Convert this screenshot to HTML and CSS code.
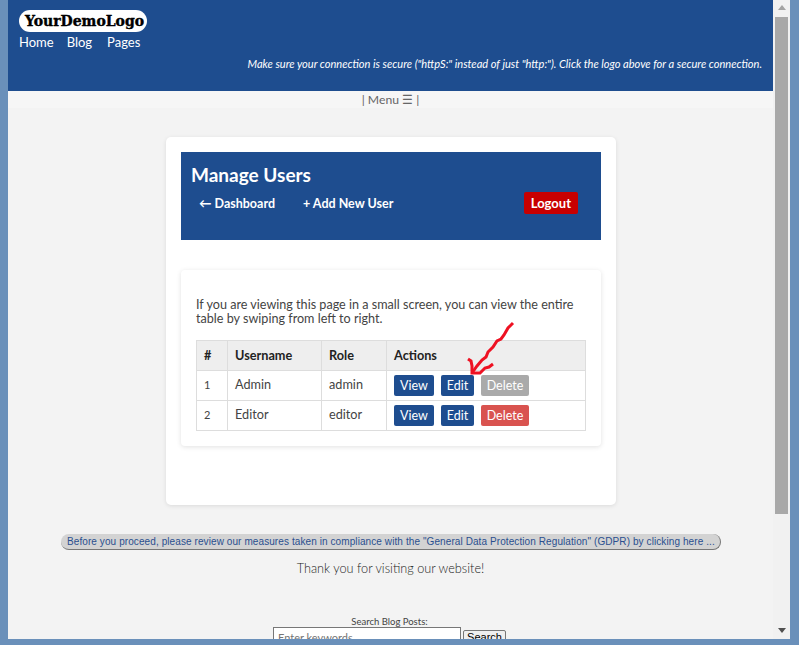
FILE: index.html
```html
<!DOCTYPE html>
<html lang="en">
<head>
    <meta charset="UTF-8">
    <meta name="viewport" content="width=device-width, initial-scale=1.0">
    <title>Manage Users</title>
    <link rel="stylesheet" href="styles.css">
</head>
<body>
    <div class="frame">
        <div class="viewport">
            <header class="site-header">
                <a class="logo" href="#">YourDemoLogo</a>
                <nav class="site-nav">
                    <a href="#">Home</a>
                    <a href="#">Blog</a>
                    <a href="#">Pages</a>
                </nav>
                <p class="secure-note">Make sure your connection is secure ("httpS:" instead of just "http:"). Click the logo above for a secure connection.</p>
            </header>
            <div class="menu-bar">| Menu ☰ |</div>

            <main class="panel">
                <div class="panel-head">
                    <h2>Manage Users</h2>
                    <div class="panel-links">
                        <a href="#">← Dashboard</a>
                        <a href="#">+ Add New User</a>
                        <a class="logout" href="#">Logout</a>
                    </div>
                </div>

                <section class="table-card">
                    <p>If you are viewing this page in a small screen, you can view the entire table by swiping from left to right.</p>
                    <table>
                        <thead>
                            <tr>
                                <th class="col-num">#</th>
                                <th class="col-user">Username</th>
                                <th class="col-role">Role</th>
                                <th>Actions</th>
                            </tr>
                        </thead>
                        <tbody>
                            <tr>
                                <td class="num">1</td>
                                <td>Admin</td>
                                <td>admin</td>
                                <td class="actions">
                                    <button class="btn btn-view">View</button>
                                    <button class="btn btn-edit">Edit</button>
                                    <button class="btn btn-off">Delete</button>
                                </td>
                            </tr>
                            <tr>
                                <td class="num">2</td>
                                <td>Editor</td>
                                <td>editor</td>
                                <td class="actions">
                                    <button class="btn btn-view">View</button>
                                    <button class="btn btn-edit">Edit</button>
                                    <button class="btn btn-del">Delete</button>
                                </td>
                            </tr>
                        </tbody>
                    </table>
                </section>
            </main>

            <a class="gdpr" href="#">Before you proceed, please review our measures taken in compliance with the "General Data Protection Regulation" (GDPR) by clicking here ...</a>
            <p class="thanks">Thank you for visiting our website!</p>

            <form class="search">
                <label for="q">Search Blog Posts:</label>
                <div class="search-row">
                    <input type="text" id="q" placeholder="Enter keywords">
                    <button type="button">Search</button>
                </div>
            </form>

            <!-- red arrow scribbled over the screenshot -->
            <svg class="arrow" width="60" height="70" viewBox="460 315 60 70">
                <polyline points="513,323 508,328 504,335 501,339 497,341 493,347 488,352 486,357 482,360 477,366 472,373"/>
                <polyline points="468,359 471,361 472,366 472,373 480,373 485,368 489,367 493,364"/>
            </svg>
        </div>

        <div class="scrollbar">
            <span class="up"></span>
            <span class="thumb"></span>
            <span class="down"></span>
        </div>
    </div>
</body>
</html>
```

FILE: styles.css
```css
/* page */
html, body {
    margin: 0;
    height: 100%;
    overflow: hidden;
}

body {
    background: #6a90ba;
    font-family: Lato, "Open Sans", sans-serif;
    color: #444;
}

.frame {
    display: flex;
    height: 639px;
    padding-left: 8px;
    padding-right: 9px;
}

.viewport {
    position: relative;
    width: 765px;
    overflow: hidden;
    background: #f3f3f3;
}

/* header */
.site-header {
    box-sizing: border-box;
    height: 91px;
    padding: 10px 11px 0;
    background: #1e4d8f;
    color: #fff;
}

.logo {
    display: block;
    width: 128px;
    height: 22px;
    border-radius: 11px;
    background: #fff;
    color: #000;
    font-family: "DejaVu Serif", serif;
    font-weight: 700;
    font-size: 14px;
    line-height: 22px;
    text-align: center;
    text-indent: 3px;
    text-decoration: none;
    white-space: nowrap;
    -webkit-text-stroke: 0.4px #000;
}

.site-nav {
    display: flex;
    gap: 14px;
    margin-top: 1px;
    line-height: 18px;
}

.site-nav a {
    color: #fff;
    font-size: 13px;
    text-decoration: none;
}

.site-nav a:nth-child(2) {
    margin-left: -1px;
    margin-right: 1px;
}

.secure-note {
    margin: 5px 0 0;
    text-align: right;
    font-size: 11.07px;
    font-style: italic;
    line-height: 15px;
}

.menu-bar {
    height: 17px;
    background: #f6f6f6;
    font-size: 12.2px;
    font-weight: 400;
    line-height: 17px;
    text-align: center;
    color: #666;
}

/* main panel */
.panel {
    box-sizing: border-box;
    width: 450px;
    height: 368px;
    margin: 29px 0 0 158px;
    padding: 15px;
    background: #fff;
    border-radius: 5px;
    box-shadow: 0 1px 4px rgba(0, 0, 0, 0.1);
}

.panel-head {
    box-sizing: border-box;
    height: 88px;
    padding: 11px 10px 0;
    background: #1e4d8f;
    color: #fff;
}

.panel-head h2 {
    margin: 0;
    font-size: 19px;
    font-weight: 700;
    line-height: 24px;
}

.panel-links {
    display: flex;
    align-items: center;
    margin-top: 5px;
    padding-left: 8px;
    font-size: 12.5px;
    font-weight: 700;
}

.panel-links a {
    margin-right: 28px;
    color: #fff;
    text-decoration: none;
}

.panel-links .logout {
    margin-left: auto;
    margin-right: 13px;
    padding: 3px 7px;
    background: #c80000;
    border-radius: 2px;
    font-size: 13px;
    line-height: 16px;
}

.table-card {
    box-sizing: border-box;
    height: 176px;
    margin-top: 30px;
    padding: 28px 15px 0;
    background: #fff;
    border-radius: 4px;
    box-shadow: 0 1px 5px rgba(0, 0, 0, 0.12);
}

.table-card p {
    margin: 0 0 14px;
    font-size: 12.6px;
    line-height: 14px;
}

table {
    width: 390px;
    border-collapse: collapse;
    table-layout: fixed;
    font-size: 12.7px;
}

th, td {
    height: 30px;
    padding: 0 7px 3px;
    border: 1px solid #ddd;
    text-align: left;
    box-sizing: border-box;
}

th {
    padding-bottom: 2px;
    background: #eee;
    font-weight: 700;
    color: #222;
}

.col-num {
    width: 31px;
}

.col-user {
    width: 94px;
}

.col-role {
    width: 65px;
}

.num {
    font-size: 11px;
}

.actions {
    padding: 0 0 0 7px;
    white-space: nowrap;
    font-size: 0;
}

.btn {
    box-sizing: border-box;
    height: 21px;
    padding: 0;
    margin-right: 7px;
    background: #1e4d8f;
    color: #fff;
    border: none;
    border-radius: 2px;
    font-family: inherit;
    font-size: 12.5px;
}

.btn-view {
    width: 40px;
}

.btn-edit {
    width: 33px;
}

.btn-off, .btn-del {
    width: 48px;
}

.btn-off {
    background: #aaa;
}

.btn-del {
    background: #d9534f;
}

/* footer bits */
.gdpr {
    display: block;
    box-sizing: border-box;
    width: 660px;
    height: 16px;
    margin: 29px 0 0 53px;
    padding-left: 6px;
    background: #d3d3d3;
    border-right: 1px solid #777;
    border-bottom: 1px solid #777;
    border-radius: 8px;
    color: #2a4f8f;
    font-family: "Liberation Sans", Arial, sans-serif;
    font-size: 10px;
    line-height: 15px;
    letter-spacing: 0.09px;
    text-decoration: none;
    white-space: nowrap;
}

.thanks {
    margin: 10px 0 0;
    font-size: 12.7px;
    font-weight: 300;
    line-height: 17px;
    text-align: center;
    color: #222;
}

.search {
    margin-top: 39px;
    padding-right: 2px;
    text-align: center;
    font-size: 9.5px;
}

.search label {
    display: block;
    line-height: 11px;
}

.search-row {
    display: flex;
    justify-content: center;
    align-items: flex-start;
    gap: 2px;
}

.search input {
    box-sizing: border-box;
    width: 188px;
    height: 20px;
    padding: 2px 4px;
    border: 1px solid #777;
    font-size: 11px;
    font-family: Lato, sans-serif;
}

.search button {
    width: 43px;
    height: 14px;
    padding: 0;
    margin-top: 3px;
    border: 1px solid #777;
    border-radius: 2px;
    background: #efefef;
    font-size: 11px;
    line-height: 12px;
    font-family: "Liberation Sans", sans-serif;
}

.arrow {
    position: absolute;
    left: 452px;
    top: 315px;
    fill: none;
    stroke: #ee1122;
    stroke-width: 3;
}

/* fake scrollbar */
.scrollbar {
    display: flex;
    flex-direction: column;
    align-items: center;
    width: 17px;
    background: #f1f1f1;
}

.scrollbar .up {
    margin-top: 5px;
    border: 4px solid transparent;
    border-top: none;
    border-bottom: 5px solid #a3a3a3;
}

.scrollbar .thumb {
    width: 13px;
    height: 497px;
    margin-top: 7px;
    background: #a8a8a8;
}

.scrollbar .down {
    margin-top: auto;
    margin-bottom: 6px;
    border: 4px solid transparent;
    border-bottom: none;
    border-top: 5px solid #505050;
}
```
